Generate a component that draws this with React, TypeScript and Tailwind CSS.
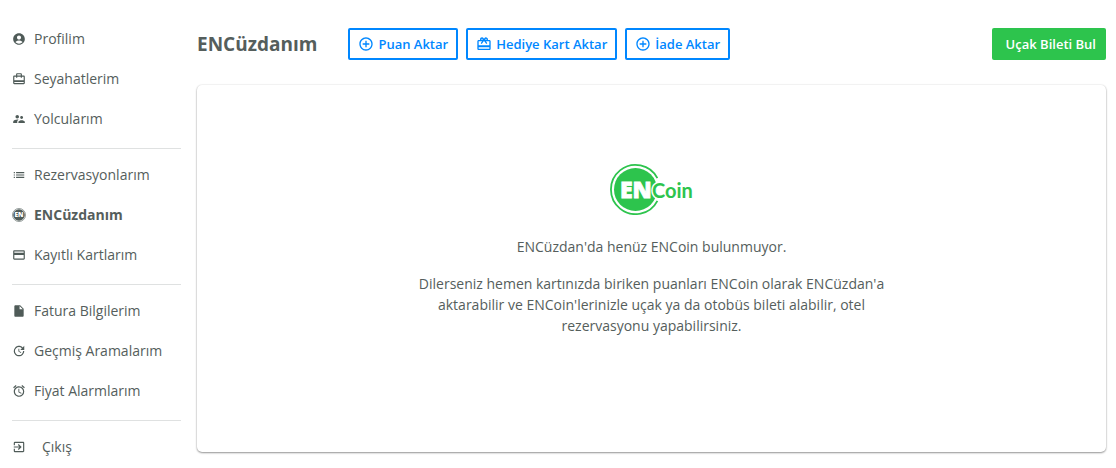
import type { ReactNode } from "react";
import type { IconType } from "react-icons";
import {
  MdAccountCircle,
  MdAddCircleOutline,
  MdAlarm,
  MdCardGiftcard,
  MdCardTravel,
  MdCreditCard,
  MdExitToApp,
  MdInsertDriveFile,
  MdList,
  MdSupervisorAccount,
  MdUpdate,
} from "react-icons/md";

function CoinIcon({ className }: { className?: string }) {
  return (
    <svg viewBox="0 0 14 14" className={className} aria-hidden="true">
      <circle cx="7" cy="7" r="6.5" fill="none" stroke="currentColor" strokeOpacity="0.6" />
      <circle cx="7" cy="7" r="5.8" fill="currentColor" />
      <text
        x="7"
        y="9.3"
        textAnchor="middle"
        fill="#fff"
        fontFamily="Open Sans, sans-serif"
        fontWeight="800"
        fontSize="6.5"
      >
        EN
      </text>
    </svg>
  );
}

function EnCoinLogo() {
  return (
    <svg width="84" height="52" viewBox="0 0 84 52" role="img" aria-label="ENCoin">
      <path
        d="M47.4 15.2A24.6 24.6 0 1 0 47.4 37.8"
        fill="none"
        stroke="#2dc44d"
        strokeWidth="1.8"
      />
      <circle cx="25.5" cy="26.5" r="21.5" fill="#2dc44d" />
      <text
        x="10"
        y="34.5"
        fill="#fff"
        stroke="#fff"
        strokeWidth="0.8"
        fontFamily="Open Sans, sans-serif"
        fontWeight="800"
        fontSize="23"
      >
        EN
      </text>
      <text
        x="42"
        y="34.5"
        fill="#2dc44d"
        stroke="#fff"
        strokeWidth="3"
        paintOrder="stroke"
        fontFamily="Lato, sans-serif"
        fontWeight="700"
        fontSize="20"
      >
        Coin
      </text>
    </svg>
  );
}

type MenuItem = {
  label: string;
  icon: IconType | typeof CoinIcon;
  active?: boolean;
};

const menuGroups: MenuItem[][] = [
  [
    { label: "Profilim", icon: MdAccountCircle },
    { label: "Seyahatlerim", icon: MdCardTravel },
    { label: "Yolcularım", icon: MdSupervisorAccount },
  ],
  [
    { label: "Rezervasyonlarım", icon: MdList },
    { label: "ENCüzdanım", icon: CoinIcon, active: true },
    { label: "Kayıtlı Kartlarım", icon: MdCreditCard },
  ],
  [
    { label: "Fatura Bilgilerim", icon: MdInsertDriveFile },
    { label: "Geçmiş Aramalarım", icon: MdUpdate },
    { label: "Fiyat Alarmlarım", icon: MdAlarm },
  ],
];

function Sidebar() {
  return (
    <nav className="w-[169px] shrink-0 pt-[19px]">
      {menuGroups.map((group) => (
        <ul key={group[0].label} className="mb-[6px] border-b border-[#dfe1e1] pb-[9px]">
          {group.map(({ label, icon: Icon, active }) => (
            <li key={label}>
              <a
                href="#"
                className={
                  active
                    ? "flex h-10 items-center gap-2 font-bold"
                    : "flex h-10 items-center gap-2"
                }
              >
                <Icon className="size-3.5 shrink-0 text-[#4f5b58]" />
                {label}
              </a>
            </li>
          ))}
        </ul>
      ))}
      <button type="button" className="flex h-10 items-center gap-4">
        <MdExitToApp className="size-3.5 shrink-0 text-[#4f5b58]" />
        Çıkış
      </button>
    </nav>
  );
}

function ActionButton({ icon: Icon, children }: { icon: IconType; children: ReactNode }) {
  return (
    <button
      type="button"
      className="flex h-8 items-center gap-1 rounded-xs border-2 border-[#0087ff] px-2 text-[13px] font-semibold text-[#0087ff]"
    >
      <Icon className="size-4" />
      {children}
    </button>
  );
}

export default function App() {
  return (
    <div className="flex gap-4 bg-white pr-2.5 pl-3 font-['Open_Sans',sans-serif] text-sm text-[#555e5c]">
      <Sidebar />

      <main className="flex-1 pt-7">
        {/* Title and actions */}
        <header className="flex items-center">
          <h1 className="mr-[31px] text-[19px] leading-8 font-bold">ENCüzdanım</h1>
          <div className="flex gap-2">
            <ActionButton icon={MdAddCircleOutline}>Puan Aktar</ActionButton>
            <ActionButton icon={MdCardGiftcard}>Hediye Kart Aktar</ActionButton>
            <ActionButton icon={MdAddCircleOutline}>İade Aktar</ActionButton>
          </div>
          <a
            href="#"
            className="ml-auto flex h-8 items-center rounded-xs bg-[#2dc44d] px-2.5 pl-3.5 text-[13px] font-semibold text-white"
          >
            Uçak Bileti Bul
          </a>
        </header>

        {/* Empty wallet */}
        <section className="mt-[25px] flex flex-col items-center rounded-[5px] px-4 pt-[78px] pb-[116px] text-center leading-[21px] shadow-[0_1px_2px_rgba(0,0,0,0.4),0_0_2px_rgba(0,0,0,0.12)]">
          <EnCoinLogo />
          <p className="mt-[21px]">ENCüzdan'da henüz ENCoin bulunmuyor.</p>
          <p className="mt-4 max-w-[480px]">
            Dilerseniz hemen kartınızda biriken puanları ENCoin olarak ENCüzdan'a aktarabilir ve
            ENCoin'lerinizle uçak ya da otobüs bileti alabilir, otel rezervasyonu yapabilirsiniz.
          </p>
        </section>
      </main>
    </div>
  );
}
